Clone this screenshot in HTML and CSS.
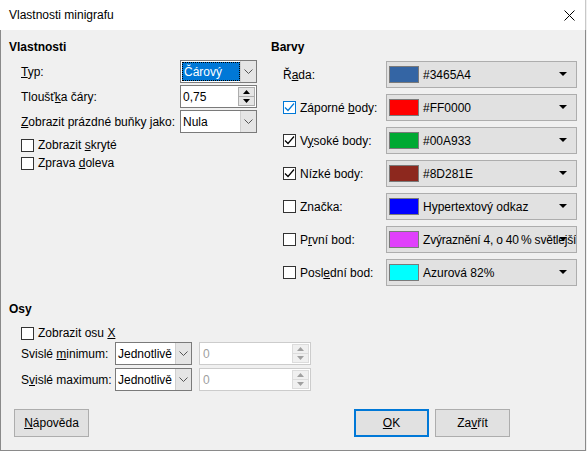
FILE: index.html
```html
<!DOCTYPE html>
<html lang="cs">
<head>
  <meta charset="UTF-8" />
  <title>Vlastnosti minigrafu</title>
  <link rel="stylesheet" href="styles.css">
</head>
<body>
  <div class="window">
    <div class="titlebar">
      <span class="title">Vlastnosti minigrafu</span>
      <svg class="close" width="11" height="11" viewBox="0 0 11 11">
        <path d="M0.5 0.5 L10.5 10.5 M10.5 0.5 L0.5 10.5" stroke="#000" stroke-width="1" fill="none"/>
      </svg>
    </div>

    <div class="content">
      <div class="top">
        <!-- left: Vlastnosti -->
        <div class="col">
          <div class="heading">Vlastnosti</div>
          <div class="form">
            <span class="lbl"><u>T</u>yp:</span>
            <div class="combo">
              <span class="combo-text selected"><span class="focus-rect">Čárový</span></span>
              <span class="drop"><svg width="9" height="5" viewBox="0 0 9 5"><path d="M0.5 0.5 L4.5 4.5 L8.5 0.5" stroke="#555" fill="none"/></svg></span>
            </div>

            <span class="lbl">Tloušť<u>k</u>a čáry:</span>
            <div class="spin">
              <span class="spin-text">0,75</span>
              <span class="spin-btns">
                <span class="sbtn"><svg width="7" height="4" viewBox="0 0 7 4"><path d="M0 4 L3.5 0 L7 4 Z" fill="#000"/></svg></span>
                <span class="sbtn"><svg width="7" height="4" viewBox="0 0 7 4"><path d="M0 0 L3.5 4 L7 0 Z" fill="#000"/></svg></span>
              </span>
            </div>

            <span class="lbl"><u>Z</u>obrazit prázdné buňky jako:</span>
            <div class="combo">
              <span class="combo-text">Nula</span>
              <span class="drop"><svg width="9" height="5" viewBox="0 0 9 5"><path d="M0.5 0.5 L4.5 4.5 L8.5 0.5" stroke="#555" fill="none"/></svg></span>
            </div>
          </div>

          <div class="checks">
            <div class="check-row"><span class="cb"></span><span>Zobrazit <u>s</u>kryté</span></div>
            <div class="check-row"><span class="cb"></span><span>Zprava <u>d</u>oleva</span></div>
          </div>
        </div>

        <!-- right: Barvy -->
        <div class="col">
          <div class="heading">Barvy</div>
          <div class="colors">
            <div class="color-row">
              <span class="clabel"><span>Ř<u>a</u>da:</span></span>
              <div class="cbox"><span class="swatch" style="background:#3465A4"></span><span class="ctext">#3465A4</span><span class="arrow"></span></div>
            </div>
            <div class="color-row">
              <span class="clabel"><span class="cb focus"><svg width="11" height="11" viewBox="0 0 11 11"><path d="M1 5.5 L4 8.5 L10 1.5" stroke="#0078d7" stroke-width="1.2" fill="none"/></svg></span><span>Záporné <u>b</u>ody:</span></span>
              <div class="cbox"><span class="swatch" style="background:#FF0000"></span><span class="ctext">#FF0000</span><span class="arrow"></span></div>
            </div>
            <div class="color-row">
              <span class="clabel"><span class="cb"><svg width="11" height="11" viewBox="0 0 11 11"><path d="M1 5.5 L4 8.5 L10 1.5" stroke="#000" stroke-width="1.2" fill="none"/></svg></span><span>V<u>y</u>soké body:</span></span>
              <div class="cbox"><span class="swatch" style="background:#00A933"></span><span class="ctext">#00A933</span><span class="arrow"></span></div>
            </div>
            <div class="color-row">
              <span class="clabel"><span class="cb"><svg width="11" height="11" viewBox="0 0 11 11"><path d="M1 5.5 L4 8.5 L10 1.5" stroke="#000" stroke-width="1.2" fill="none"/></svg></span><span>Nízké body:</span></span>
              <div class="cbox"><span class="swatch" style="background:#8D281E"></span><span class="ctext">#8D281E</span><span class="arrow"></span></div>
            </div>
            <div class="color-row">
              <span class="clabel"><span class="cb"></span><span>Značka:</span></span>
              <div class="cbox"><span class="swatch" style="background:#0000FF"></span><span class="ctext">Hypertextový odkaz</span><span class="arrow"></span></div>
            </div>
            <div class="color-row">
              <span class="clabel"><span class="cb"></span><span>P<u>r</u>vní bod:</span></span>
              <div class="cbox"><span class="swatch" style="background:#E040FB"></span><span class="ctext tight">Zvýraznění 4, o 40&#8239;% světlejší</span><span class="arrow"></span></div>
            </div>
            <div class="color-row">
              <span class="clabel"><span class="cb"></span><span>Posl<u>e</u>dní bod:</span></span>
              <div class="cbox"><span class="swatch" style="background:#00FFFF"></span><span class="ctext">Azurová 82%</span><span class="arrow"></span></div>
            </div>
          </div>
        </div>
      </div>

      <!-- Osy -->
      <div class="osy">
        <div class="heading">Osy</div>
        <div class="check-row axis-check"><span class="cb"></span><span>Zobrazit osu <u>X</u></span></div>
        <div class="axis-form">
          <span class="lbl">Svislé <u>m</u>inimum:</span>
          <div class="combo">
            <span class="combo-text">Jednotlivě</span>
            <span class="drop"><svg width="9" height="5" viewBox="0 0 9 5"><path d="M0.5 0.5 L4.5 4.5 L8.5 0.5" stroke="#555" fill="none"/></svg></span>
          </div>
          <div class="spin disabled">
            <span class="spin-text">0</span>
            <span class="spin-btns">
              <span class="sbtn"><svg width="7" height="4" viewBox="0 0 7 4"><path d="M0 4 L3.5 0 L7 4 Z" fill="#a0a0a0"/></svg></span>
              <span class="sbtn"><svg width="7" height="4" viewBox="0 0 7 4"><path d="M0 0 L3.5 4 L7 0 Z" fill="#a0a0a0"/></svg></span>
            </span>
          </div>

          <span class="lbl">S<u>v</u>islé maximum:</span>
          <div class="combo">
            <span class="combo-text">Jednotlivě</span>
            <span class="drop"><svg width="9" height="5" viewBox="0 0 9 5"><path d="M0.5 0.5 L4.5 4.5 L8.5 0.5" stroke="#555" fill="none"/></svg></span>
          </div>
          <div class="spin disabled">
            <span class="spin-text">0</span>
            <span class="spin-btns">
              <span class="sbtn"><svg width="7" height="4" viewBox="0 0 7 4"><path d="M0 4 L3.5 0 L7 4 Z" fill="#a0a0a0"/></svg></span>
              <span class="sbtn"><svg width="7" height="4" viewBox="0 0 7 4"><path d="M0 0 L3.5 4 L7 0 Z" fill="#a0a0a0"/></svg></span>
            </span>
          </div>
        </div>
      </div>

      <div class="buttons">
        <button class="btn"><u>N</u>ápověda</button>
        <button class="btn default push"><u>O</u>K</button>
        <button class="btn">Za<u>v</u>řít</button>
      </div>
    </div>
  </div>
</body>
</html>
```

FILE: styles.css
```css
body, html {
  margin: 0;
  padding: 0;
  font-family: 'Liberation Sans', Arial, sans-serif;
  font-size: 12px;
  color: #000;
  background: #f0f0f0;
}

u {
  text-decoration: underline;
  text-underline-offset: 1px;
}

.window {
  width: 586px;
  height: 451px;
}

.titlebar {
  height: 30px;
  background: #fff;
  display: flex;
  align-items: center;
  padding-left: 9px;
  border-right: 1px solid #c8c8c8;
  box-sizing: border-box;
}

.close {
  margin-left: auto;
  margin-right: 10px;
}

.content {
  height: 421px;
  box-sizing: border-box;
  border: 1px solid #8a8a8a;
  border-top: none;
  padding: 9px 0 0 8px;
  background: #f0f0f0;
}

.top {
  display: grid;
  grid-template-columns: 248px 306px;
  column-gap: 14px;
}

.heading {
  font-weight: bold;
  height: 16px;
  line-height: 16px;
}

/* left form */
.form {
  margin-top: 5px;
  padding-left: 12px;
  display: grid;
  grid-template-columns: 1fr 77px;
  grid-auto-rows: 23px;
  row-gap: 2px;
  align-items: center;
}

.lbl {
  white-space: nowrap;
}

.combo, .spin {
  height: 23px;
  box-sizing: border-box;
  border: 1px solid #7a7a7a;
  background: #fff;
  display: flex;
  align-items: stretch;
}

.combo-text, .spin-text {
  flex: 1;
  display: flex;
  align-items: center;
  padding-left: 2px;
  white-space: nowrap;
  overflow: hidden;
}

.combo-text.selected {
  background: #0078d7;
  color: #fff;
  margin: 1px 0 1px 1px;
  padding: 0;
}

.focus-rect {
  flex: 1;
  align-self: stretch;
  display: flex;
  align-items: center;
  padding-left: 1px;
  border: 1px dotted #000;
}

.drop {
  width: 15px;
  background: #e5e5e5;
  border-left: 1px solid #cfcfcf;
  display: flex;
  align-items: center;
  justify-content: center;
}

.spin-btns {
  width: 15px;
  display: flex;
  flex-direction: column;
  margin: 1px;
  border: 1px solid #adadad;
  background: #e5e5e5;
}

.sbtn {
  flex: 1;
  display: flex;
  align-items: center;
  justify-content: center;
}

.sbtn + .sbtn {
  border-top: 1px solid #adadad;
}

.spin.disabled {
  border-color: #cccccc;
  color: #a0a0a0;
}

.spin.disabled .spin-text {
  padding-left: 3px;
}

.spin.disabled .spin-btns {
  border-color: #dcdcdc;
  background: #f0f0f0;
}

.spin.disabled .sbtn + .sbtn {
  border-top-color: #dcdcdc;
}

/* checkboxes */
.checks {
  margin-top: 3px;
  padding-left: 12px;
}

.check-row {
  height: 18px;
  display: flex;
  align-items: center;
  white-space: nowrap;
}

.cb {
  width: 13px;
  height: 13px;
  box-sizing: border-box;
  border: 1px solid #333;
  background: #fff;
  margin-right: 4px;
  display: inline-flex;
  align-items: center;
  justify-content: center;
  flex-shrink: 0;
}

.cb.focus {
  border-color: #0078d7;
}

/* right colors */
.colors {
  margin-top: 6px;
  padding-left: 12px;
  display: flex;
  flex-direction: column;
  gap: 6px;
}

.color-row {
  display: flex;
  align-items: center;
  height: 27px;
}

.clabel {
  width: 103px;
  display: flex;
  align-items: center;
  white-space: nowrap;
}

.cbox {
  width: 191px;
  height: 27px;
  box-sizing: border-box;
  border: 1px solid #adadad;
  background: #e1e1e1;
  display: flex;
  align-items: center;
  padding-left: 2px;
  overflow: hidden;
  position: relative;
}

.swatch {
  width: 30px;
  height: 17px;
  box-sizing: border-box;
  border: 1px solid #7a7a7a;
  margin-right: 4px;
  flex-shrink: 0;
}

.ctext {
  white-space: nowrap;
}

.ctext.tight {
  letter-spacing: -0.2px;
}

.arrow {
  position: absolute;
  right: 9px;
  top: 10px;
  width: 0;
  height: 0;
  border-left: 4px solid transparent;
  border-right: 4px solid transparent;
  border-top: 4px solid #000;
}

/* axes */
.osy {
  margin-top: 15px;
}

.axis-check {
  margin-top: 8px;
  padding-left: 12px;
  height: 16px;
}

.axis-form {
  margin-top: 1px;
  padding-left: 12px;
  display: grid;
  grid-template-columns: 94px 77px 119px;
  grid-auto-rows: 23px;
  row-gap: 3px;
  align-items: center;
}

.axis-form .spin {
  margin-left: 7px;
}

/* buttons */
.buttons {
  margin-top: 18px;
  margin-left: 5px;
  width: 496px;
  display: flex;
  gap: 6px;
}

.btn {
  width: 75px;
  height: 28px;
  box-sizing: border-box;
  background: #e1e1e1;
  border: 1px solid #adadad;
  font-family: inherit;
  font-size: 12px;
  color: #000;
  padding: 0;
}

.btn.default {
  border: 2px solid #0078d7;
}

.btn.push {
  margin-left: auto;
}
```
